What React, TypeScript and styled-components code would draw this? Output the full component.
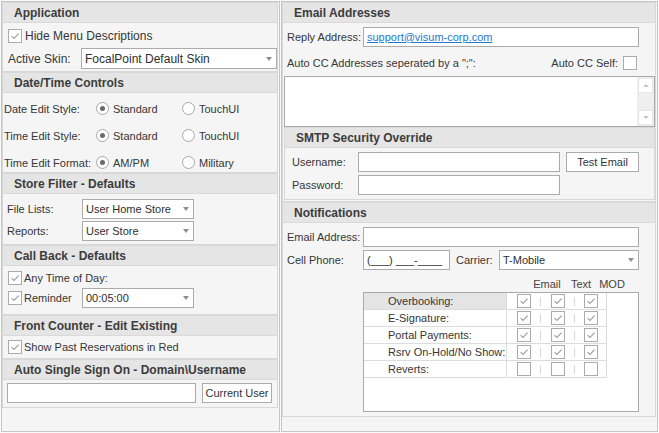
import React from "react";
import styled, { createGlobalStyle } from "styled-components";

const GlobalStyle = createGlobalStyle`
  html, body { margin: 0; padding: 0; background: #fafafa; }
  body { font-family: "Liberation Sans", Arial, sans-serif; color: #363636; }
  *, *::before, *::after { box-sizing: border-box; }
`;

const Root = styled.div`
  width: 659px;
  height: 433px;
  padding: 1px;
  display: flex;
  gap: 1px;
  background: #fafafa;
  overflow: hidden;
`;

const Panel = styled.div<{ $w?: number }>`
  flex: ${(p) => (p.$w ? `0 0 ${p.$w}px` : "1 1 auto")};
  height: 431px;
  border: 1px solid #c6c6c6;
  background: #f5f5f5;
  padding-right: 1px;
  display: flex;
  flex-direction: column;
`;

const Group = styled.section<{ $inset?: boolean }>`
  flex: none;
  border: 1px solid #d8d8d8;
  background: #f5f5f5;
  margin-left: ${(p) => (p.$inset ? 1 : 0)}px;
  display: flex;
  flex-direction: column;
`;

const Header = styled.div`
  height: 20px;
  flex: none;
  display: flex;
  align-items: center;
  padding-left: 11px;
  background: #e5e5e5;
  border-bottom: 1px solid #dadada;
  font-size: 12px;
  font-weight: bold;
  color: #3c3c3c;
  white-space: nowrap;
`;

const Body = styled.div<{ $pad: string }>`
  display: flex;
  flex-direction: column;
  padding: ${(p) => p.$pad};
`;

const Row = styled.div<{
  $h: number;
  $gap?: number;
  $mt?: number;
  $pl?: number;
  $pr?: number;
  $between?: boolean;
}>`
  display: flex;
  align-items: center;
  flex: none;
  height: ${(p) => p.$h}px;
  gap: ${(p) => p.$gap ?? 0}px;
  margin-top: ${(p) => p.$mt ?? 0}px;
  padding-left: ${(p) => p.$pl ?? 0}px;
  padding-right: ${(p) => p.$pr ?? 0}px;
  justify-content: ${(p) => (p.$between ? "space-between" : "flex-start")};
`;

const Text = styled.span<{ $size?: number; $w?: number }>`
  font-size: ${(p) => p.$size ?? 11}px;
  ${(p) => (p.$w ? `width: ${p.$w}px; flex: none;` : "")}
  white-space: nowrap;
  color: #363636;
`;

const Inline = styled.div<{ $gap: number; $w?: number }>`
  display: flex;
  align-items: center;
  gap: ${(p) => p.$gap}px;
  ${(p) => (p.$w ? `width: ${p.$w}px; flex: none;` : "")}
`;

const Field = styled.div<{ $w: number; $h?: number; $size?: number }>`
  width: ${(p) => p.$w}px;
  height: ${(p) => p.$h ?? 20}px;
  flex: none;
  border: 1px solid #ababab;
  background: #fff;
  display: flex;
  align-items: center;
  justify-content: space-between;
  padding: 0 4px 0 3px;
  font-size: ${(p) => p.$size ?? 11}px;
  color: #2f2f2f;
  white-space: nowrap;
`;

const Caret = styled.span`
  width: 0;
  height: 0;
  flex: none;
  border-left: 3.5px solid transparent;
  border-right: 3.5px solid transparent;
  border-top: 4px solid #8e8e8e;
`;

const Link = styled.a`
  color: #1f78d1;
  text-decoration: underline;
  font-size: 11px;
`;

const Button = styled.button<{ $w: number }>`
  width: ${(p) => p.$w}px;
  height: 20px;
  flex: none;
  border: 1px solid #ababab;
  background: #fff;
  font-family: inherit;
  font-size: 11px;
  color: #333;
  padding: 0;
  display: flex;
  align-items: center;
  justify-content: center;
`;

const Box = styled.span`
  width: 14px;
  height: 14px;
  flex: none;
  border: 1px solid #ababab;
  background: #fff;
  display: inline-flex;
  align-items: center;
  justify-content: center;
`;

const Radio = styled.span<{ $on?: boolean }>`
  width: 13px;
  height: 13px;
  flex: none;
  border-radius: 50%;
  border: 1px solid #a8a8a8;
  background: #fff;
  display: inline-flex;
  align-items: center;
  justify-content: center;
  &::after {
    content: "";
    width: 5px;
    height: 5px;
    border-radius: 50%;
    background: ${(p) => (p.$on ? "#6a6a6a" : "transparent")};
  }
`;

const Option = styled.div<{ $w?: number }>`
  display: flex;
  align-items: center;
  gap: 4px;
  font-size: 11px;
  white-space: nowrap;
  ${(p) => (p.$w ? `width: ${p.$w}px; flex: none;` : "")}
`;

const Memo = styled.div`
  height: 51px;
  flex: none;
  margin: 6px 0 0 1px;
  border: 1px solid #a9a9a9;
  background: #fff;
  display: flex;
  justify-content: flex-end;
`;

const ScrollBar = styled.div`
  width: 17px;
  background: #efefef;
  display: flex;
  flex-direction: column;
  justify-content: space-between;
  align-items: center;
  padding: 1px 0;
`;

const ScrollBtn = styled.div<{ $down?: boolean }>`
  width: 15px;
  height: 15px;
  background: #fff;
  border: 1px solid #e6e6e6;
  display: flex;
  align-items: center;
  justify-content: center;
  &::after {
    content: "";
    width: 0;
    height: 0;
    border-left: 3px solid transparent;
    border-right: 3px solid transparent;
    ${(p) =>
      p.$down ? "border-top: 3px solid #c4c4c4;" : "border-bottom: 3px solid #c4c4c4;"}
  }
`;

const ColHeads = styled.div`
  display: flex;
  align-items: center;
  height: 16px;
  margin-top: 6px;
  padding-left: 243px;
  flex: none;
`;

const ColHead = styled.span<{ $w: number }>`
  width: ${(p) => p.$w}px;
  text-align: center;
  font-size: 11px;
  color: #444;
`;

const Grid = styled.div`
  margin-left: 76px;
  width: 276px;
  height: 120px;
  flex: none;
  border: 1px solid #a9a9a9;
  background: #fff;
`;

const GridRow = styled.div`
  display: flex;
  height: 17px;
  width: 243px;
  border-bottom: 1px solid #dcdcdc;
`;

const LabelCell = styled.div<{ $focus?: boolean }>`
  width: 143px;
  flex: none;
  border-right: 1px solid #dcdcdc;
  padding-left: 24px;
  font-size: 11px;
  color: #363636;
  display: flex;
  align-items: center;
  white-space: nowrap;
  background: ${(p) => (p.$focus ? "#e4e4e4" : "#fff")};
`;

const CheckCell = styled.div`
  width: 100px;
  flex: none;
  border-right: 1px solid #dcdcdc;
  display: flex;
  align-items: center;
`;

const CheckCol = styled.div<{ $w: number }>`
  width: ${(p) => p.$w}px;
  flex: none;
  display: flex;
  align-items: center;
  justify-content: center;
`;

const Divider = styled.span`
  width: 1px;
  height: 9px;
  flex: none;
  background: #d8d8d8;
`;

const Tick = () => (
  <svg width="10" height="10" viewBox="0 0 10 10">
    <path d="M1.6 5.1 L4 7.5 L8.6 2.6" fill="none" stroke="#9d9d9d" strokeWidth="1.1" />
  </svg>
);

const Check = ({ on }: { on?: boolean }) => <Box>{on ? <Tick /> : null}</Box>;

const gridRows = [
  { label: "Overbooking:", on: true, focus: true },
  { label: "E-Signature:", on: true },
  { label: "Portal Payments:", on: true },
  { label: "Rsrv On-Hold/No Show:", on: true },
  { label: "Reverts:", on: false },
];

export default function App() {
  return (
    <>
      <GlobalStyle />
      <Root>
        <Panel $w={279}>
          <Group>
            <Header>Application</Header>
            <Body $pad="3px 0 2px 5px">
              <Row $h={20} $gap={3}>
                <Check on />
                <Text $size={12}>Hide Menu Descriptions</Text>
              </Row>
              <Row $h={21} $mt={2}>
                <Text $size={12} $w={73}>Active Skin:</Text>
                <Field $w={196} $h={21} $size={12}>
                  FocalPoint Default Skin
                  <Caret />
                </Field>
              </Row>
            </Body>
          </Group>

          <Group>
            <Header>Date/Time Controls</Header>
            <Body $pad="6px 0 0 1px">
              <Row $h={19}>
                <Text $w={92}>Date Edit Style:</Text>
                <Option $w={86}><Radio $on />Standard</Option>
                <Option><Radio />TouchUI</Option>
              </Row>
              <Row $h={19} $mt={8}>
                <Text $w={92}>Time Edit Style:</Text>
                <Option $w={86}><Radio $on />Standard</Option>
                <Option><Radio />TouchUI</Option>
              </Row>
              <Row $h={19} $mt={8}>
                <Text $w={92}>Time Edit Format:</Text>
                <Option $w={86}><Radio $on />AM/PM</Option>
                <Option><Radio />Military</Option>
              </Row>
            </Body>
          </Group>

          <Group>
            <Header>Store Filter - Defaults</Header>
            <Body $pad="5px 0 3px 4px">
              <Row $h={20}>
                <Text $w={75}>File Lists:</Text>
                <Field $w={112}>User Home Store<Caret /></Field>
              </Row>
              <Row $h={20} $mt={2}>
                <Text $w={75}>Reports:</Text>
                <Field $w={112}>User Store<Caret /></Field>
              </Row>
            </Body>
          </Group>

          <Group>
            <Header>Call Back - Defaults</Header>
            <Body $pad="1px 0 6px 5px">
              <Row $h={21} $gap={2}>
                <Check on />
                <Text>Any Time of Day:</Text>
              </Row>
              <Row $h={20}>
                <Inline $gap={2} $w={74}>
                  <Check on />
                  <Text>Reminder</Text>
                </Inline>
                <Field $w={112}>00:05:00<Caret /></Field>
              </Row>
            </Body>
          </Group>

          <Group>
            <Header>Front Counter - Edit Existing</Header>
            <Body $pad="0 0 0 5px">
              <Row $h={22} $gap={2}>
                <Check on />
                <Text>Show Past Reservations in Red</Text>
              </Row>
            </Body>
          </Group>

          <Group>
            <Header>Auto Single Sign On - Domain\Username</Header>
            <Body $pad="3px 0 4px 4px">
              <Row $h={20} $gap={6}>
                <Field $w={189} />
                <Button $w={70}>Current User</Button>
              </Row>
            </Body>
          </Group>
        </Panel>

        <Panel>
          <Group>
            <Header>Email Addresses</Header>
            <Body $pad="4px 0 1px 0">
              <Row $h={20} $pl={4}>
                <Text $w={76}>Reply Address:</Text>
                <Field $w={276}>
                  <Link>support@visum-corp.com</Link>
                </Field>
              </Row>
              <Row $h={14} $mt={9} $pl={4} $pr={18} $between>
                <Text>Auto CC Addresses seperated by a ";":</Text>
                <Inline $gap={5}>
                  <Text>Auto CC Self:</Text>
                  <Check />
                </Inline>
              </Row>
              <Memo>
                <ScrollBar>
                  <ScrollBtn />
                  <ScrollBtn $down />
                </ScrollBar>
              </Memo>
              <Group $inset>
                <Header>SMTP Security Override</Header>
                <Body $pad="4px 0 4px 7px">
                  <Row $h={20} $gap={0}>
                    <Text $w={66}>Username:</Text>
                    <Field $w={202} />
                    <Button $w={73} style={{ marginLeft: 6 }}>Test Email</Button>
                  </Row>
                  <Row $h={20} $mt={3}>
                    <Text $w={66}>Password:</Text>
                    <Field $w={202} />
                  </Row>
                </Body>
              </Group>
            </Body>
          </Group>

          <Group>
            <Header>Notifications</Header>
            <Body $pad="4px 0 4px 4px">
              <Row $h={20}>
                <Text $w={76}>Email Address:</Text>
                <Field $w={276} />
              </Row>
              <Row $h={20} $mt={3}>
                <Text $w={76}>Cell Phone:</Text>
                <Field $w={87}>(___) ___-____</Field>
                <Text $w={43} style={{ marginLeft: 6 }}>Carrier:</Text>
                <Field $w={140}>T-Mobile<Caret /></Field>
              </Row>
              <ColHeads>
                <ColHead $w={34}>Email</ColHead>
                <ColHead $w={34}>Text</ColHead>
                <ColHead $w={28}>MOD</ColHead>
              </ColHeads>
              <Grid>
                {gridRows.map((r) => (
                  <GridRow key={r.label}>
                    <LabelCell $focus={r.focus}>{r.label}</LabelCell>
                    <CheckCell>
                      <CheckCol $w={33}><Check on={r.on} /></CheckCol>
                      <Divider />
                      <CheckCol $w={33}><Check on={r.on} /></CheckCol>
                      <Divider />
                      <CheckCol $w={31}><Check on={r.on} /></CheckCol>
                    </CheckCell>
                  </GridRow>
                ))}
              </Grid>
            </Body>
          </Group>
        </Panel>
      </Root>
    </>
  );
}
